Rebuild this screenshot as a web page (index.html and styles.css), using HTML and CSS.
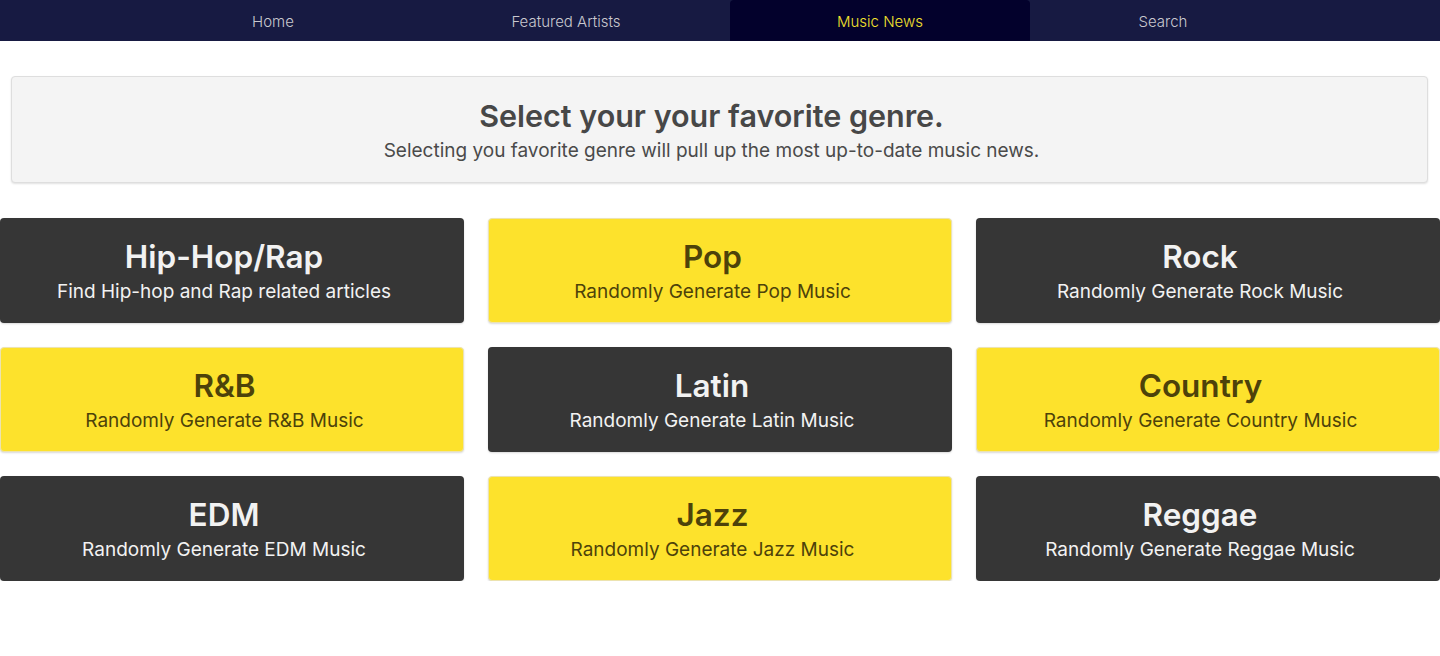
FILE: index.html
```html
<!DOCTYPE html>
<html>
<head>
<meta charset="utf-8">
<link rel="stylesheet" href="styles.css">
</head>
<body>
<nav class="nav">
  <a class="nav-item w-home">Home</a>
  <a class="nav-item w-feat">Featured Artists</a>
  <a class="nav-item w-news active">Music News</a>
  <a class="nav-item w-search">Search</a>
</nav>
<main class="main">
  <section class="jumbo">
    <h1 class="jumbo-title">Select your your favorite genre.</h1>
    <p class="jumbo-sub">Selecting you favorite genre will pull up the most up-to-date music news.</p>
  </section>
  <section class="grid">
    <div class="card dark"><h2 class="card-title">Hip-Hop/Rap</h2><p class="card-sub">Find Hip-hop and Rap related articles</p></div>
    <div class="card yellow"><h2 class="card-title">Pop</h2><p class="card-sub">Randomly Generate Pop Music</p></div>
    <div class="card dark"><h2 class="card-title">Rock</h2><p class="card-sub">Randomly Generate Rock Music</p></div>
    <div class="card yellow"><h2 class="card-title">R&amp;B</h2><p class="card-sub">Randomly Generate R&amp;B Music</p></div>
    <div class="card dark"><h2 class="card-title">Latin</h2><p class="card-sub">Randomly Generate Latin Music</p></div>
    <div class="card yellow"><h2 class="card-title">Country</h2><p class="card-sub">Randomly Generate Country Music</p></div>
    <div class="card dark"><h2 class="card-title">EDM</h2><p class="card-sub">Randomly Generate EDM Music</p></div>
    <div class="card yellow"><h2 class="card-title">Jazz</h2><p class="card-sub">Randomly Generate Jazz Music</p></div>
    <div class="card dark"><h2 class="card-title">Reggae</h2><p class="card-sub">Randomly Generate Reggae Music</p></div>
  </section>
</main>
</body>
</html>
```
FILE: styles.css
```css
* { box-sizing: border-box; }
html, body { margin: 0; padding: 0; background: #fff; }
body { font-family: Inter, "Noto Sans", sans-serif; }

.nav {
  display: flex;
  height: 41px;
  background: #171a42;
  padding-left: 128px;
}
.nav-item {
  display: flex;
  align-items: center;
  justify-content: center;
  height: 41px;
  padding-top: 2px;
  color: #c9c9cf;
  font-size: 15px;
  font-weight: 300;
}
.w-home { width: 290px; }
.w-feat { width: 296px; margin-right: 16px; }
.w-news { width: 300px; }
.w-search { width: 266px; }
.nav-item.active {
  background: #03012c;
  color: #f4e12c;
  border-radius: 4px 4px 0 0;
}

.main { padding: 35px 0 0; }

.jumbo {
  margin: 0 12px 0 11px;
  height: 107px;
  background: #f4f4f4;
  border: 1px solid #dedede;
  border-radius: 4px;
  box-shadow: 0 1px 2px rgba(0,0,0,0.12);
  text-align: center;
  padding: 20px 16px 0 0;
}
.jumbo-title {
  margin: 0;
  font-size: 30.5px;
  line-height: 38px;
  font-weight: 600;
  color: #474747;
}
.jumbo-sub {
  margin: 0;
  padding-top: 1px;
  font-size: 19px;
  line-height: 30px;
  color: #4a4a4a;
}

.grid {
  display: grid;
  grid-template-columns: repeat(3, 464px);
  column-gap: 24px;
  row-gap: 24px;
  margin-top: 35px;
}
.card {
  height: 105px;
  border-radius: 4px;
  text-align: center;
  padding: 20px 16px 0 0;
  box-shadow: 0 1px 2px rgba(0,0,0,0.15);
}
.card.dark { background: #363636; color: #f2f2f2; }
.card.yellow { background: #fde22c; color: #4d420a; border: 1px solid #ece3b0; padding-top: 19px; padding-right: 15px; }
.card-title {
  margin: 0;
  font-size: 31.5px;
  line-height: 38px;
  font-weight: 600;
}
.card-sub {
  margin: 0;
  padding-top: 1px;
  font-size: 19px;
  line-height: 30px;
}
```
